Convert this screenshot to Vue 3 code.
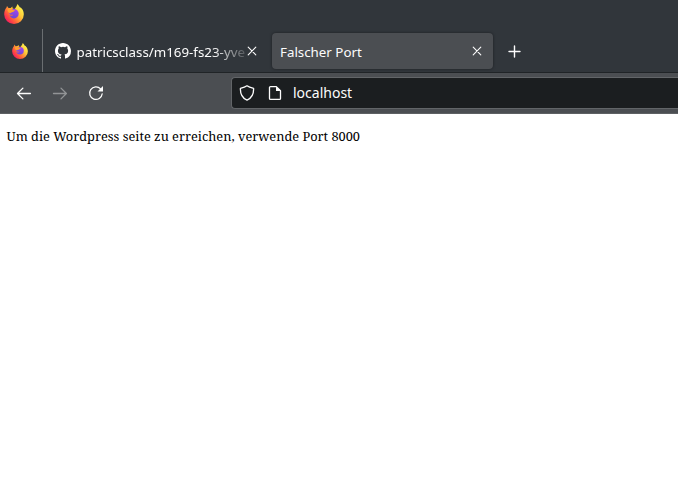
<script setup>
import { ref } from 'vue'

const tabs = ref([
  { id: 1, title: 'patricsclass/m169-fs23-yve', github: true, active: false },
  { id: 2, title: 'Falscher Port', github: false, active: true },
])
</script>

<template>
  <div class="browser">
    <svg class="defs" width="0" height="0" aria-hidden="true">
      <defs>
        <linearGradient id="flame" x1="0.88" y1="0.2" x2="0.15" y2="0.85">
          <stop offset="0" stop-color="#fff04a" />
          <stop offset="0.3" stop-color="#ffc93a" />
          <stop offset="0.55" stop-color="#ff8a35" />
          <stop offset="0.78" stop-color="#ff4f40" />
          <stop offset="1" stop-color="#f5205c" />
        </linearGradient>
        <linearGradient id="globe" x1="0.7" y1="0" x2="0.4" y2="1">
          <stop offset="0" stop-color="#a545ee" />
          <stop offset="1" stop-color="#6a48d8" />
        </linearGradient>
        <symbol id="firefox" viewBox="0 0 20 20">
          <path fill="url(#flame)" d="M13.500 0C14.500 1 15.200 2.300 16 3.400c.7-.1 1.300.5 1.700 1.200C19.200 6.300 19.800 8.400 19.800 10.500A9.800 9.500 0 0 1 .2 10.500C.2 8 .8 5.500 2.500 3.600L3 2l1.500 2 2.200-.1L8.300 2.500l.4 2 1.700.6C11.500 4 12.800 2.200 13.500 0Z" />
          <circle cx="10" cy="9.700" r="4.700" fill="url(#globe)" />
          <path fill="#ffa02f" d="M3.500 5.300c2-1 4-.6 5.300.6l2.200.3c.1.900-1.800 1.100-2.100 1.900-1.200.2-2 .4-2.500 1.200-2-.5-3-2.100-2.900-4Z" />
          <path fill="#ff7139" d="M4.800 9c.5 1.200 1.500 1.800 2.700 1.800.8 0 1.200-.2 1.800 0-.4.700-1.200 1.100-2.200 1-1.500-.1-2.600-1.300-2.300-2.800Z" />
        </symbol>
      </defs>
    </svg>

    <header class="titlebar">
      <svg class="logo-large"><use href="#firefox" /></svg>
    </header>

    <nav class="tabstrip">
      <div class="pinned">
        <svg class="logo-small"><use href="#firefox" /></svg>
      </div>
      <div v-for="tab in tabs" :key="tab.id" class="tab" :class="{ active: tab.active }">
        <svg v-if="tab.github" class="favicon" viewBox="0 0 16 16">
          <path fill="#fff" d="M8 0C3.580 0 0 3.580 0 8c0 3.540 2.290 6.530 5.470 7.590.4.070.55-.17.55-.38 0-.19-.01-.82-.01-1.490-2.010.37-2.530-.49-2.690-.94-.09-.23-.48-.94-.82-1.130-.28-.15-.68-.52-.01-.53.63-.01 1.080.58 1.230.82.72 1.210 1.870.87 2.330.66.070-.52.28-.87.51-1.070-1.780-.2-3.640-.89-3.640-3.950 0-.87.31-1.590.82-2.150-.08-.2-.36-1.020.08-2.120 0 0 .67-.21 2.200.82a7.400 7.400 0 0 1 4 0c1.530-1.040 2.200-.82 2.200-.82.44 1.100.16 1.920.08 2.120.51.56.82 1.270.82 2.150 0 3.070-1.870 3.750-3.650 3.950.29.25.54.73.54 1.480 0 1.070-.01 1.930-.01 2.200 0 .21.15.46.55.38A8.010 8.010 0 0 0 16 8c0-4.420-3.580-8-8-8Z" />
        </svg>
        <span class="label">{{ tab.title }}</span>
        <svg class="close" viewBox="0 0 10 10"><path d="M1.200 1.200 8.800 8.800M8.800 1.200 1.200 8.800" /></svg>
      </div>
      <svg class="new-tab" viewBox="0 0 14 14"><path d="M6.500 2v11M1 7.500h11" /></svg>
    </nav>

    <div class="toolbar">
      <svg class="tool" viewBox="0 0 16 16"><path d="M14.400 8.500H1.500M6.900 3.100 1.500 8.500l5.400 5.400" /></svg>
      <svg class="tool disabled" viewBox="0 0 16 16"><path d="M1.500 8.500h12.900M9 3.100l5.400 5.400L9 13.900" /></svg>
      <svg class="tool" viewBox="0 0 16 16">
        <path d="M12.600 3.900A6.300 6.300 0 1 0 14.200 8.800" />
        <path class="solid" d="M15 1v5.500H9.500Z" />
      </svg>
      <div class="urlbar">
        <svg class="tool" viewBox="0 0 16 16"><path d="M8 .8c2 1.500 4.300 2 6.600 2.500.2 5-1.300 9.500-6.600 11.900C2.700 12.800 1.200 8.300 1.400 3.300 3.700 2.800 6 2.300 8 .8Z" /></svg>
        <svg class="tool" viewBox="0 0 16 16">
          <path d="M3.500 1.600h5.800l4.200 4.200v7.600a1 1 0 0 1-1 1h-9a1 1 0 0 1-1-1V2.600A1 1 0 0 1 3.500 1.600Z" />
          <path class="solid" d="M9 1.500V6h4.800Z" />
        </svg>
        <span class="address">localhost</span>
      </div>
    </div>

    <main class="page">
      <p class="message">Um die Wordpress seite zu erreichen, verwende Port 8000</p>
    </main>
  </div>
</template>

<style>
body {
  overflow: hidden;
  background: #fff;
}
</style>

<style scoped>
.browser {
  display: flex;
  flex-direction: column;
  height: 489px;
  overflow: hidden;
  background: #fff;
  font-family: "Noto Sans", sans-serif;
  color: #fcfcfc;
}
.defs { position: absolute; }
svg {
  display: block;
  flex: none;
  fill: none;
  stroke: #fcfcfc;
  stroke-width: 1.3;
  stroke-linecap: round;
  stroke-linejoin: round;
}
use, .favicon, .defs { stroke: none; }
.titlebar {
  box-sizing: border-box;
  height: 29px;
  padding: 4px 0 0 4px;
  background: #31363b;
}
.logo-large { width: 20px; height: 20px; stroke: none; }
.logo-small { width: 16px; height: 16px; stroke: none; }
.tabstrip {
  box-sizing: border-box;
  display: flex;
  align-items: center;
  height: 44px;
  background: #31363b;
  border-bottom: 1px solid #202427;
}
.pinned {
  box-sizing: border-box;
  display: flex;
  align-items: center;
  width: 43px;
  height: 43px;
  padding-left: 12px;
  border-right: 1px solid #6a6e71;
}
.tab {
  box-sizing: border-box;
  display: flex;
  align-items: center;
  width: 221px;
  height: 36px;
  margin-left: 4px;
  padding: 0 11px 0 8px;
  border-radius: 4px;
}
.tab.active {
  background: #4b4e52;
  box-shadow: 0 0 3px rgba(0, 0, 0, 0.45);
}
.favicon { width: 16px; height: 16px; margin-right: 5.5px; }
.label {
  flex: 1;
  min-width: 0;
  white-space: nowrap;
  font-size: 13.33px;
  line-height: 20px;
  padding-top: 2px;
}
.tab:not(.active) .label {
  flex: none;
  width: 169px;
  mask-image: linear-gradient(to right, #000 135px, transparent 175px);
}
.close { width: 10px; height: 10px; stroke-width: 1.1; }
.tab:not(.active) .close { margin-left: 1.5px; }
.new-tab { width: 14px; height: 14px; margin-left: 15px; stroke-width: 1.4; }
.toolbar {
  box-sizing: border-box;
  display: flex;
  align-items: center;
  gap: 20px;
  height: 41px;
  padding-left: 16px;
  background: #4b4e52;
  border-bottom: 1px solid #5d6063;
}
.tool { width: 16px; height: 16px; }
.disabled { opacity: 0.4; }
.solid { fill: #fcfcfc; stroke: none; }
.urlbar {
  box-sizing: border-box;
  display: flex;
  flex: 1;
  align-items: center;
  height: 32px;
  margin-left: 107px;
  padding-left: 7px;
  background: #1b1e20;
  border: 1px solid #626568;
  border-right: none;
  border-radius: 4px 0 0 4px;
}
.urlbar .tool + .tool { margin-left: 12px; }
.address { margin-left: 10px; font-size: 14px; line-height: 20px; }
.page { flex: 1; padding: 13px 6.5px; }
.message {
  margin: 0;
  font-family: "Noto Serif", "DejaVu Serif Condensed", "DejaVu Serif", serif;
  font-size: 12.8px;
  line-height: 18px;
  white-space: nowrap;
  color: #000;
}
</style>
